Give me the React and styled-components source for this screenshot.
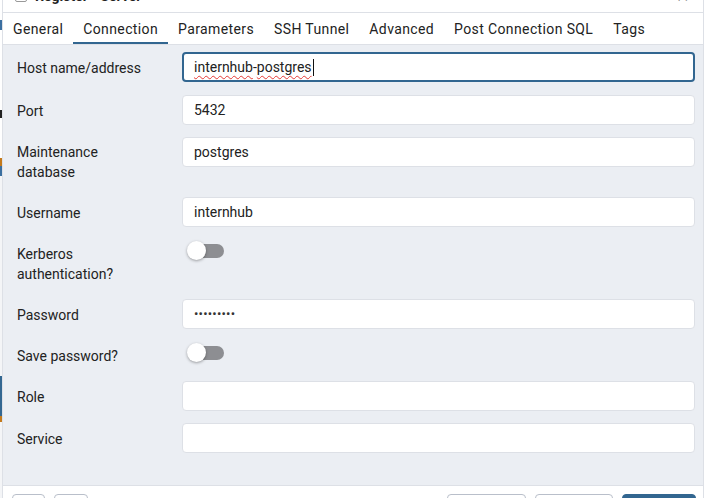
import React from "react";
import styled, { createGlobalStyle } from "styled-components";

const Global = createGlobalStyle`
  html, body { margin: 0; padding: 0; background: #ffffff; }
  body { font-family: Roboto, "Noto Sans", "Liberation Sans", sans-serif; color: #222222; }
  #root { width: 704px; height: 498px; overflow: hidden; }
`;

const Screen = styled.div`
  display: flex;
  width: 704px;
  height: 498px;
  overflow: hidden;
  background: #ffffff;
`;

const Backdrop = styled.div`
  width: 2px;
  flex: none;
  display: flex;
  flex-direction: column;
  background: #f4f5f7;
`;

const Frag = styled.div`
  height: ${(p) => p.$h}px;
  background: ${(p) => p.$c};
  flex: none;
`;

const Dialog = styled.div`
  width: 700px;
  flex: none;
  display: flex;
  flex-direction: column;
  border-left: 1px solid #dde0e6;
  border-right: 1px solid #dde0e6;
  background: #ffffff;
`;

const TitleBar = styled.div`
  height: 32px;
  margin-top: -20px;
  flex: none;
  display: flex;
  align-items: center;
  gap: 8px;
  padding: 0 12px;
  border-bottom: 1px solid #dde0e6;
  font-size: 14px;
  font-weight: 700;
  color: #222;
`;

const TitleIcon = styled.span`
  width: 10px;
  height: 10px;
  border: 1px solid #999;
  border-radius: 2px;
  flex: none;
`;

const TitleText = styled.span`
  flex: 1;
`;

const Close = styled.span`
  font-weight: 400;
  font-size: 16px;
  color: #333;
  padding-right: 2px;
`;

const Tabs = styled.div`
  display: flex;
  height: 31px;
  flex: none;
  border-bottom: 1px solid #dde0e6;
  background: #fff;
`;

const Tab = styled.div`
  padding: 2px 10px 0 10px;
  display: flex;
  align-items: center;
  font-size: 14px;
  letter-spacing: 0.38px;
  color: #222;
  white-space: nowrap;
  border-bottom: 2px solid ${(p) => (p.$active ? "#326690" : "transparent")};
`;

const Body = styled.div`
  height: 440px;
  flex: none;
  box-sizing: border-box;
  background: #ebeef3;
  padding: 7px 8px 0 14px;
  display: flex;
  flex-direction: column;
  gap: 12.5px;
`;

const Row = styled.div`
  display: grid;
  grid-template-columns: 135px 1fr;
  column-gap: 30px;
  align-items: ${(p) => (p.$top ? "start" : "center")};
`;

const Label = styled.div`
  font-size: 14px;
  line-height: 20px;
  padding: ${(p) => (p.$top ? "5px 0 2px" : "2px 0 0")};
  color: #222;
`;

const Field = styled.div`
  height: 30px;
  box-sizing: border-box;
  background: #fff;
  border: ${(p) => (p.$focus ? "2px solid #326690" : "1px solid #dde0e6")};
  border-radius: 4px;
  padding: 0 ${(p) => (p.$focus ? 10 : 11)}px;
  display: flex;
  align-items: center;
  font-size: 14px;
  color: #222;
  white-space: nowrap;
`;

const Misspelled = styled.span`
  text-decoration: underline wavy #e53935;
  text-decoration-thickness: 1px;
  text-underline-offset: 3px;
`;

const Caret = styled.span`
  display: inline-block;
  width: 1px;
  height: 17px;
  background: #111;
  margin-left: 1px;
`;

const Dots = styled.span`
  font-size: 13px;
  letter-spacing: 0.2px;
  color: #333;
`;

const SwitchWrap = styled.div`
  height: 24px;
  display: flex;
  align-items: center;
  padding-left: 13px;
`;

const Track = styled.div`
  position: relative;
  width: 29px;
  height: 14px;
  border-radius: 7px;
  background: #8d8e92;
`;

const Knob = styled.div`
  position: absolute;
  left: -8px;
  top: -3px;
  width: 19px;
  height: 19px;
  border-radius: 50%;
  background: #fff;
  box-shadow: 0 1px 3px rgba(0, 0, 0, 0.35);
`;

const Footer = styled.div`
  flex: none;
  height: 60px;
  border-top: 1px solid #dde0e6;
  background: #fff;
  display: flex;
  align-items: flex-start;
  padding: 8px 7px 0 9px;
  gap: 9px;
`;

const Btn = styled.div`
  width: ${(p) => p.$w}px;
  height: 30px;
  box-sizing: border-box;
  border-radius: 4px;
  border: 1px solid ${(p) => (p.$primary ? "#326690" : "#b9bfca")};
  background: ${(p) => (p.$primary ? "#326690" : "#fff")};
  flex: none;
`;

const Spacer = styled.div`
  flex: 1;
`;

function Switch() {
  return (
    <SwitchWrap>
      <Track>
        <Knob />
      </Track>
    </SwitchWrap>
  );
}

export default function App() {
  return (
    <>
      <Global />
      <Screen>
        <Backdrop>
          <Frag $h={20} $c="#ffffff" />
          <Frag $h={10} $c="#3b6fa0" />
          <Frag $h={80} $c="#ffffff" />
          <Frag $h={8} $c="#222" />
          <Frag $h={40} $c="#ffffff" />
          <Frag $h={8} $c="#c47a1c" />
          <Frag $h={10} $c="#3b6fa0" />
          <Frag $h={200} $c="#f4f5f7" />
          <Frag $h={40} $c="#336791" />
          <Frag $h={6} $c="#c47a1c" />
        </Backdrop>
        <Dialog>
          <TitleBar>
            <TitleIcon />
            <TitleText>Register - Server</TitleText>
            <Close>✕</Close>
          </TitleBar>
          <Tabs>
            <Tab>General</Tab>
            <Tab $active>Connection</Tab>
            <Tab>Parameters</Tab>
            <Tab>SSH Tunnel</Tab>
            <Tab>Advanced</Tab>
            <Tab>Post Connection SQL</Tab>
            <Tab>Tags</Tab>
          </Tabs>
          <Body>
            <Row>
              <Label>Host name/address</Label>
              <Field $focus>
                <Misspelled>internhub</Misspelled>-<Misspelled>postgres</Misspelled>
                <Caret />
              </Field>
            </Row>
            <Row>
              <Label>Port</Label>
              <Field>5432</Field>
            </Row>
            <Row $top>
              <Label $top>Maintenance database</Label>
              <Field>postgres</Field>
            </Row>
            <Row>
              <Label>Username</Label>
              <Field>internhub</Field>
            </Row>
            <Row $top>
              <Label $top>Kerberos authentication?</Label>
              <Switch />
            </Row>
            <Row>
              <Label>Password</Label>
              <Field>
                <Dots>•••••••••</Dots>
              </Field>
            </Row>
            <Row $top>
              <Label $top>Save password?</Label>
              <Switch />
            </Row>
            <Row>
              <Label>Role</Label>
              <Field />
            </Row>
            <Row>
              <Label>Service</Label>
              <Field />
            </Row>
          </Body>
          <Footer>
            <Btn $w={33} />
            <Btn $w={34} />
            <Spacer />
            <Btn $w={79} />
            <Btn $w={78} />
            <Btn $w={74} $primary />
          </Footer>
        </Dialog>
      </Screen>
    </>
  );
}
